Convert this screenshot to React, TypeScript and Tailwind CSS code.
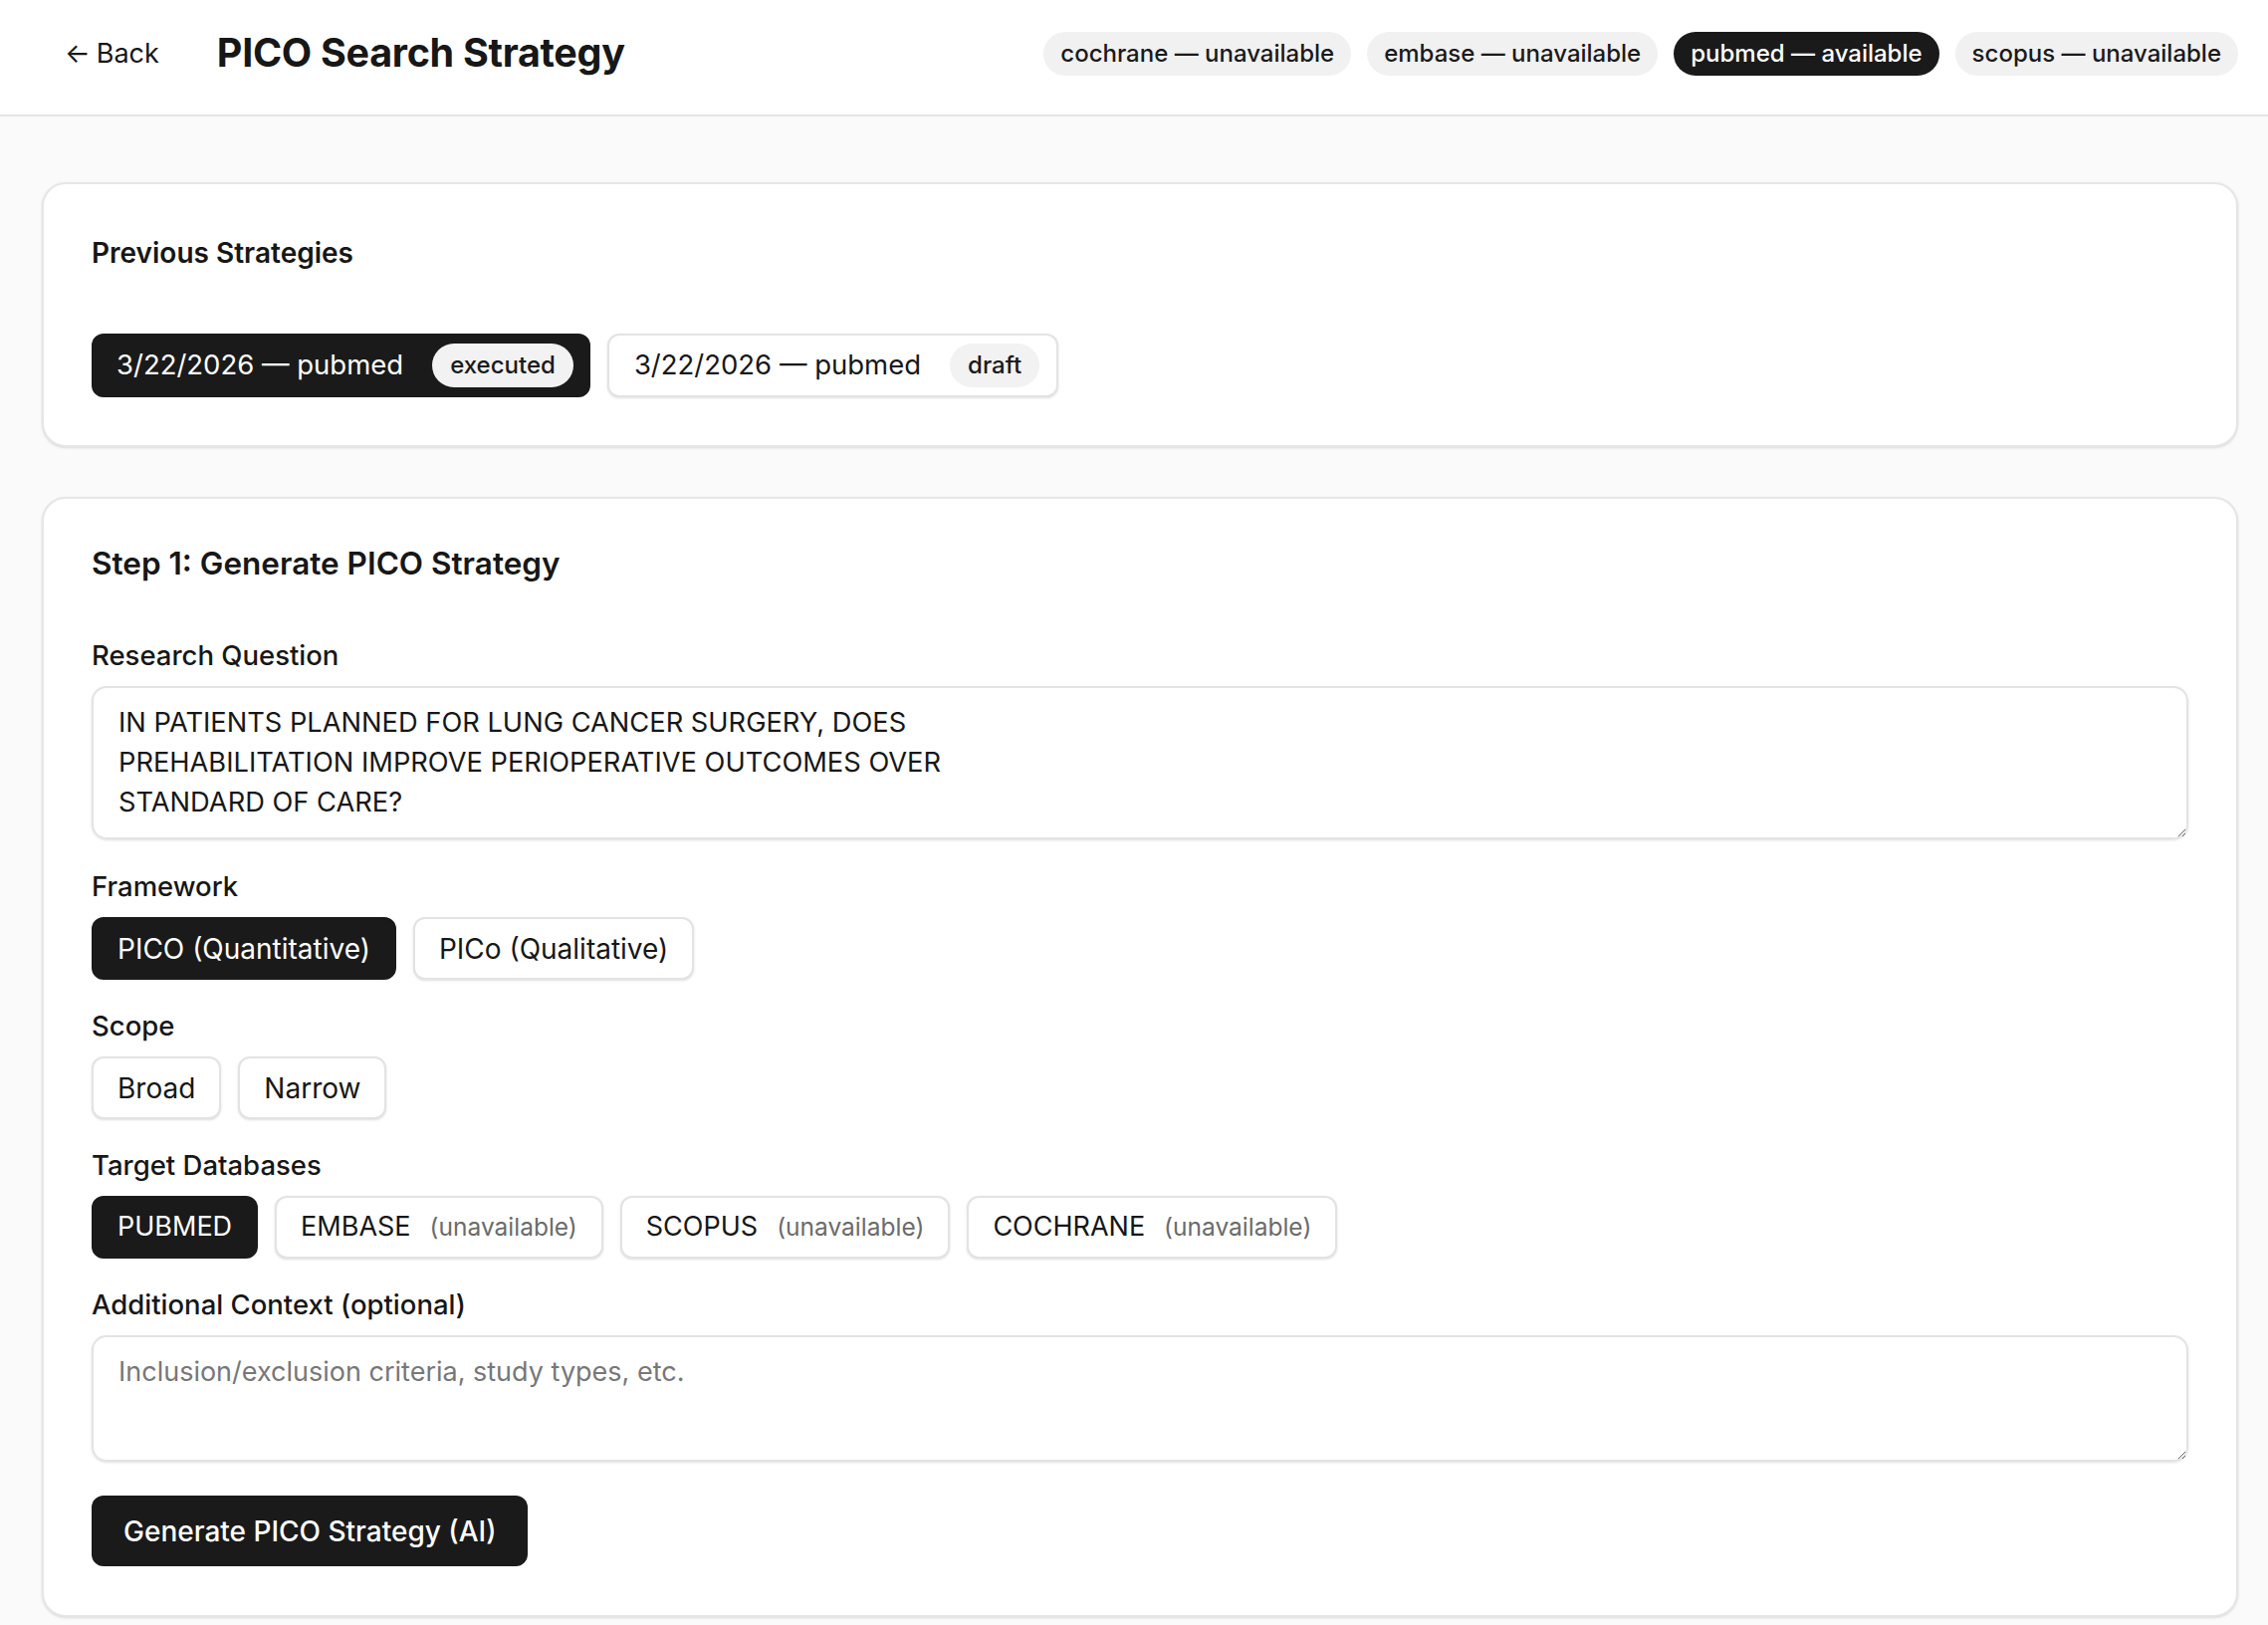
import React from 'react';

const DB_STATUS = [
  { name: 'cochrane', available: false },
  { name: 'embase', available: false },
  { name: 'pubmed', available: true },
  { name: 'scopus', available: false },
];

const TARGETS = [
  { name: 'PUBMED', available: true },
  { name: 'EMBASE', available: false },
  { name: 'SCOPUS', available: false },
  { name: 'COCHRANE', available: false },
];

const QUESTION =
  'IN PATIENTS PLANNED FOR LUNG CANCER SURGERY, DOES\nPREHABILITATION IMPROVE PERIOPERATIVE OUTCOMES OVER\nSTANDARD OF CARE?';

const Toggle = ({
  active = false,
  children,
}: {
  active?: boolean;
  children: React.ReactNode;
}) => (
  <button
    type="button"
    className={
      active
        ? 'h-[63px] px-[24px] rounded-[12px] border-2 border-[#1a1a1a] bg-[#1a1a1a] text-white text-[28px] flex items-center'
        : 'h-[63px] px-[24px] rounded-[12px] border-2 border-[#e3e3e3] bg-white text-[#171717] text-[28px] flex items-center shadow-sm'
    }
  >
    {children}
  </button>
);

const Label = ({ children }: { children: React.ReactNode }) => (
  <div className="text-[27.5px] leading-[36px] font-medium text-[#171717] mb-[13px]">{children}</div>
);

export default function App() {
  return (
    <div className="min-h-screen bg-[#fafafa] font-['Inter','Liberation_Sans',sans-serif] text-[#171717]">
      <header className="h-[117px] bg-white border-b-2 border-[#e5e5e5] flex items-center justify-between pl-[51px] pr-[30px] pb-[7px]">
        <div className="flex items-center gap-[44px]">
          <button type="button" className="px-[14px] text-[27px] text-[#171717] flex items-center gap-[6px]">
            <span>←</span>
            <span>Back</span>
          </button>
          <h1 className="text-[39.5px] font-bold tracking-[-0.3px]">PICO Search Strategy</h1>
        </div>
        <div className="flex items-center gap-[16px]">
          {DB_STATUS.map((db) => (
            <span
              key={db.name}
              className={
                db.available
                  ? 'h-[44px] px-[17px] rounded-full bg-[#1a1a1a] text-white text-[24px] font-medium flex items-center'
                  : 'h-[44px] px-[17px] rounded-full bg-[#f1f1f1] text-[#1a1a1a] text-[24px] font-medium flex items-center'
              }
            >
              {db.name} — {db.available ? 'available' : 'unavailable'}
            </span>
          ))}
        </div>
      </header>

      <main className="pl-[42px] pr-[30px] pt-[66px] pb-[12px] flex flex-col gap-[50px]">
        <section className="bg-white border-2 border-[#e6e6e6] rounded-[24px] shadow-sm p-[48px]">
          <h2 className="mt-[3px] text-[28px] leading-[36px] font-semibold">Previous Strategies</h2>
          <div className="mt-[63px] flex gap-[17px]">
            <button
              type="button"
              className="h-[64px] pl-[25px] pr-[17px] rounded-[12px] bg-[#1a1a1a] text-white text-[27.5px] flex items-center gap-[29px]"
            >
              <span>3/22/2026 — pubmed</span>
              <span className="h-[44px] px-[18px] rounded-full bg-[#f2f2f2] text-[#1a1a1a] text-[24px] font-medium flex items-center">
                executed
              </span>
            </button>
            <button
              type="button"
              className="h-[64px] pl-[25px] pr-[17px] rounded-[12px] border-2 border-[#e3e3e3] bg-white text-[#171717] text-[27.5px] flex items-center gap-[29px] shadow-sm"
            >
              <span>3/22/2026 — pubmed</span>
              <span className="h-[44px] px-[18px] rounded-full bg-[#f2f2f2] text-[#1a1a1a] text-[24px] font-medium flex items-center">
                draft
              </span>
            </button>
          </div>
        </section>

        <section className="bg-white border-2 border-[#e6e6e6] rounded-[24px] shadow-sm p-[48px] pb-[49px]">
          <h2 className="text-[31.5px] leading-[34px] font-semibold">Step 1: Generate PICO Strategy</h2>

          <div className="mt-[57px]">
            <Label>Research Question</Label>
            <textarea
              defaultValue={QUESTION}
              className="block w-full h-[154px] px-[25px] py-[15px] text-[27.25px] leading-[40px] border-2 border-[#e3e3e3] rounded-[15px] shadow-sm outline-none"
            />
          </div>

          <div className="mt-[29px]">
            <Label>Framework</Label>
            <div className="flex gap-[17px]">
              <Toggle active>PICO (Quantitative)</Toggle>
              <Toggle>PICo (Qualitative)</Toggle>
            </div>
          </div>

          <div className="mt-[28px]">
            <Label>Scope</Label>
            <div className="flex gap-[17px]">
              <Toggle>Broad</Toggle>
              <Toggle>Narrow</Toggle>
            </div>
          </div>

          <div className="mt-[28px]">
            <Label>Target Databases</Label>
            <div className="flex gap-[17px]">
              {TARGETS.map((t) => (
                <Toggle key={t.name} active={t.available}>
                  <span className="text-[27px]">{t.name}</span>
                  {!t.available && (
                    <span className="ml-[19px] text-[24.5px] text-[#6b6b6b]">(unavailable)</span>
                  )}
                </Toggle>
              ))}
            </div>
          </div>

          <div className="mt-[28px]">
            <Label>Additional Context (optional)</Label>
            <textarea
              placeholder="Inclusion/exclusion criteria, study types, etc."
              className="block w-full h-[127px] px-[25px] py-[15px] text-[27px] leading-[40px] border-2 border-[#e3e3e3] rounded-[15px] shadow-sm outline-none placeholder:text-[#777777]"
            />
          </div>

          <button
            type="button"
            className="mt-[34px] h-[71px] px-[32px] rounded-[12px] bg-[#1a1a1a] text-white text-[28px] font-medium"
          >
            Generate PICO Strategy (AI)
          </button>
        </section>
      </main>
    </div>
  );
}
